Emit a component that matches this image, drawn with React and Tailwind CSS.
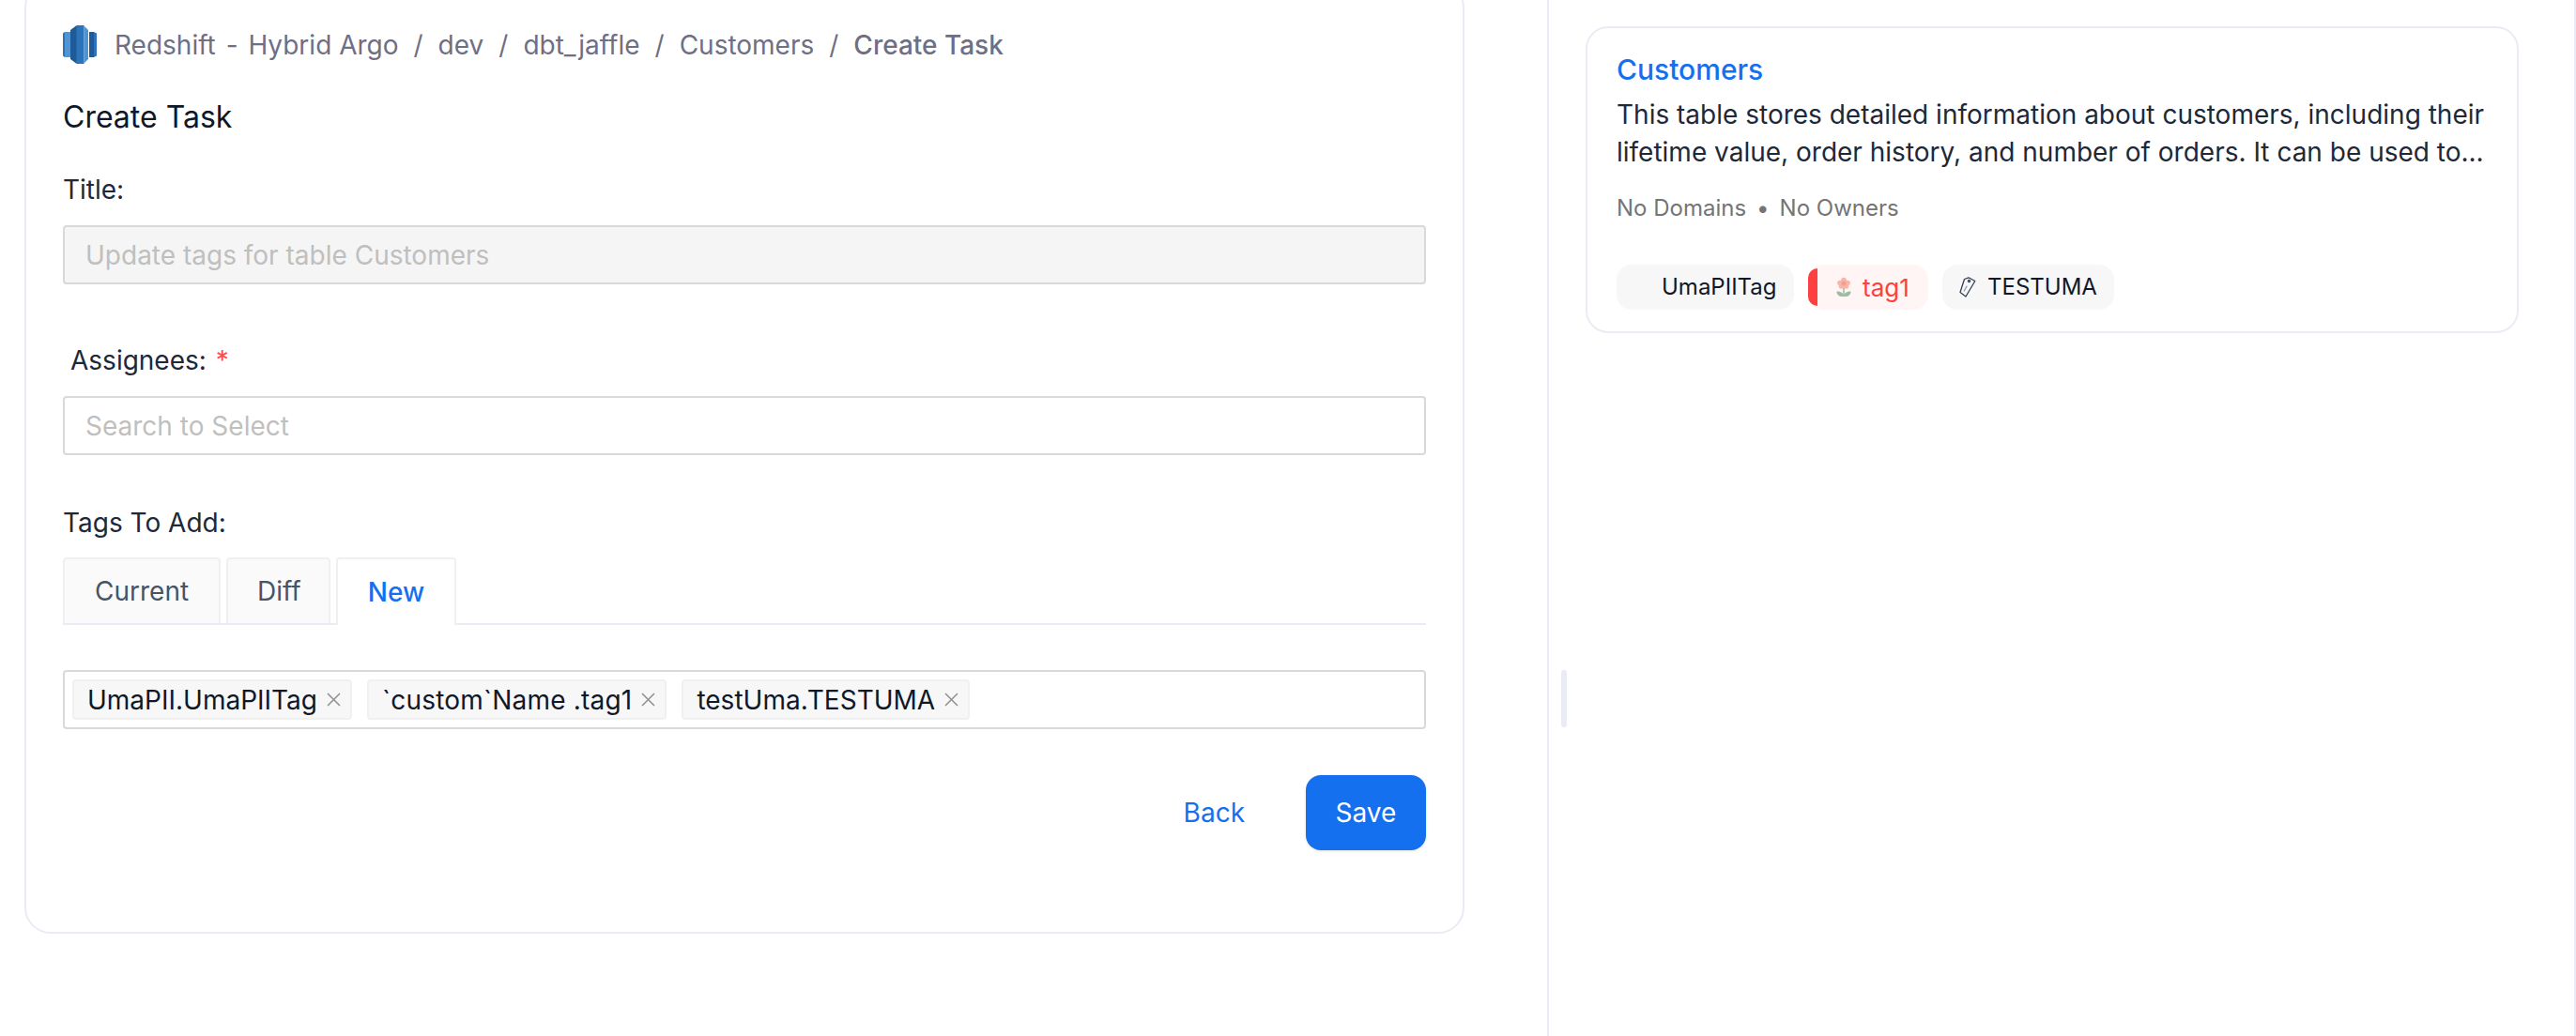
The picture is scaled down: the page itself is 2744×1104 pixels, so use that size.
import React from 'react';

const font = { fontFamily: 'Inter, "Noto Sans", sans-serif' };

function RedshiftLogo() {
  return (
    <svg width="36" height="41" viewBox="0 0 36 41" className="shrink-0">
      <path d="M0 8.5 L2 7 V34 L0 32.5 Z" fill="#2e73b8" />
      <rect x="2" y="7" width="6" height="27" fill="#5294cf" />
      <path d="M8 5 L14 0.5 H18 V40.5 H14 L8 36 Z" fill="#205b99" />
      <rect x="14.5" y="0" width="8" height="41" fill="#2e73b8" />
      <path d="M22.5 0.5 L27 5 V36 L22.5 40.5 Z" fill="#5294cf" />
      <rect x="28" y="7" width="5" height="27" fill="#205b99" />
      <path d="M33 7 L36 8.5 V32.5 L33 34 Z" fill="#2e73b8" />
    </svg>
  );
}

function CloseIcon() {
  return (
    <svg width="15" height="15" viewBox="0 0 15 15" className="shrink-0" fill="none" stroke="#8f8f8f" strokeWidth="1.5">
      <path d="M1 1 L14 14 M14 1 L1 14" />
    </svg>
  );
}

function FlowerIcon() {
  return (
    <svg width="16" height="22" viewBox="0 0 16 22" className="shrink-0">
      <g fill="#f8b4a8">
        <circle cx="8" cy="3.5" r="2.8" />
        <circle cx="4" cy="6.5" r="2.8" />
        <circle cx="12" cy="6.5" r="2.8" />
        <circle cx="5.5" cy="10" r="2.8" />
        <circle cx="10.5" cy="10" r="2.8" />
      </g>
      <circle cx="8" cy="7" r="2.6" fill="#f69f91" />
      <path d="M8 12 V20" stroke="#9dbda3" strokeWidth="1.6" />
      <path d="M8 21 C3 21.5 0.5 19 0.5 15.5 C4.5 15.5 8 17 8 21 Z" fill="#9dbda3" />
      <path d="M8 21 C13 21.5 15.5 19 15.5 15.5 C11.5 15.5 8 17 8 21 Z" fill="#9dbda3" />
    </svg>
  );
}

function TagIcon() {
  return (
    <svg width="18" height="22" viewBox="0 0 18 22" className="shrink-0" fill="none" stroke="#344054" strokeWidth="1.3" strokeLinejoin="round">
      <path d="M5.5 2.5 L10 0.8 L16.8 4.5 L7 21 L1 16.5 Z" />
      <circle cx="10.5" cy="4.6" r="1.1" />
      <path d="M5 15.3 L8.3 9.7" stroke="#98a2b3" />
    </svg>
  );
}

function SelectedTag({ label, className = '' }) {
  return (
    <div className="flex h-[43px] items-center gap-[10px] rounded-[4px] border-2 border-[#f0f0f0] bg-[#f7f7f8] pl-[14px] pr-[10px] text-[28px] text-[#101828]">
      <span className={`whitespace-pre ${className}`}>{label}</span>
      <CloseIcon />
    </div>
  );
}

export default function App() {
  const crumbs = ['dev', 'dbt_jaffle', 'Customers'];

  return (
    <div className="relative flex h-[1104px] w-[2744px] overflow-hidden bg-white" style={font}>
      {/* Form side */}
      <div className="w-[1648px] shrink-0 pl-[26px]">
        <div className="-mt-[20px] h-[1015px] w-[1534px] rounded-[28px] border-2 border-[#eaecf5] px-[39px] pt-[45px]">
          <div className="flex h-[41px] items-center text-[28px] text-[#6f6f84]">
            <RedshiftLogo />
            <span className="ml-[19px] whitespace-pre">
              Redshift <span className="mx-[3px]">-</span> Hybrid Argo
            </span>
            {crumbs.map((crumb) => (
              <React.Fragment key={crumb}>
                <span className="mx-[16px]">/</span>
                <span>{crumb}</span>
              </React.Fragment>
            ))}
            <span className="mx-[16px]">/</span>
            <span className="font-medium text-[#6f6f84]">Create Task</span>
          </div>

          <h1 className="mt-[37px] text-[32px] leading-[40px] text-[#101828]">Create Task</h1>

          <div className="mt-[39px] text-[28px] leading-[36px] text-[#1d2939]">Title:</div>
          <div className="mt-[20px] flex h-[63px] items-center rounded-[4px] border-2 border-[#d9d9d9] bg-[#f5f5f5] px-[22px] text-[28px] text-[#bfbfbf]">
            Update tags for table Customers
          </div>

          <div className="ml-[8px] mt-[63px] text-[28px] leading-[36px] text-[#1d2939]">
            Assignees: <span className="ml-[2px] text-[#ff4d4f]">*</span>
          </div>
          <div className="mt-[20px] flex h-[63px] items-center rounded-[4px] border-2 border-[#d9d9d9] bg-white px-[22px] text-[28px] text-[#bfbfbf]">
            Search to Select
          </div>

          <div className="mt-[54px] text-[28px] leading-[36px] text-[#1d2939]">Tags To Add:</div>

          <div className="mt-[19px] flex h-[72px] gap-[6px] border-b-2 border-[#eaecf5] text-[28px]">
            <div className="flex h-[70px] items-center rounded-t-[4px] border-2 border-b-0 border-[#f0f0f0] bg-[#fafafa] px-[32px] text-[#475467]">Current</div>
            <div className="flex h-[70px] items-center rounded-t-[4px] border-2 border-b-0 border-[#f0f0f0] bg-[#fafafa] pl-[31px] pr-[29px] text-[#475467]">Diff</div>
            <div className="flex h-[72px] items-center rounded-t-[4px] border-2 border-b-0 border-[#f0f0f0] bg-white px-[32px] font-medium text-[#1570ef]">New</div>
          </div>

          <div className="mt-[48px] flex h-[63px] items-center gap-[16px] rounded-[4px] border-2 border-[#d9d9d9] bg-white pl-[8px]">
            <SelectedTag label="UmaPII.UmaPIITag" />
            <SelectedTag label="`custom`Name .tag1" className="tracking-[0.2px]" />
            <SelectedTag label="testUma.TESTUMA" />
          </div>

          <div className="mt-[49px] flex items-center justify-end gap-[65px] text-[28px]">
            <button className="text-[#1570ef]">Back</button>
            <button className="h-[80px] w-[128px] rounded-[16px] bg-[#1570ef] text-white shadow-sm">Save</button>
          </div>
        </div>
      </div>

      {/* Preview side */}
      <div className="flex-1 border-x-2 border-[#eaecf5] pl-[39px] pt-[28px]">
        <div className="h-[327px] w-[994px] rounded-[24px] border-2 border-[#eaecf5] px-[31px] pt-[24px]">
          <div className="text-[30px] font-medium leading-[40px] text-[#1570ef]">Customers</div>
          <p className="mt-[8px] text-[28px] leading-[40px] text-[#1d2939]">
            This table stores detailed information about customers, including their
            <br />
            lifetime value, order history, and number of orders. It can be used to...
          </p>
          <div className="mt-[24px] flex items-center text-[24px] leading-[32px] text-[#757575]">
            <span>No Domains</span>
            <span className="mx-[11px]">•</span>
            <span>No Owners</span>
          </div>
          <div className="mt-[44px] flex h-[48px] gap-[15px] text-[24px]">
            <div className="flex w-[189px] items-center rounded-[16px] bg-[#f7f7f8] pl-[48px] text-[#101828]">UmaPIITag</div>
            <div className="relative flex w-[128px] items-center gap-[12px] rounded-[16px] bg-[#fff5f5] pl-[30px] text-[26px] text-[#ff4040]">
              <span className="absolute left-0 top-[4px] h-[40px] w-[10px] rounded-l-[10px] bg-[#ff4040]" />
              <FlowerIcon />
              <span>tag1</span>
            </div>
            <div className="flex w-[183px] items-center gap-[12px] rounded-[16px] bg-[#f7f7f8] pl-[18px] text-[#101828]">
              <TagIcon />
              <span>TESTUMA</span>
            </div>
          </div>
        </div>
      </div>

      {/* Resize handle */}
      <div className="absolute left-[1663px] top-[714px] h-[61px] w-[6px] rounded-full bg-[#eaecf5]" />
    </div>
  );
}
